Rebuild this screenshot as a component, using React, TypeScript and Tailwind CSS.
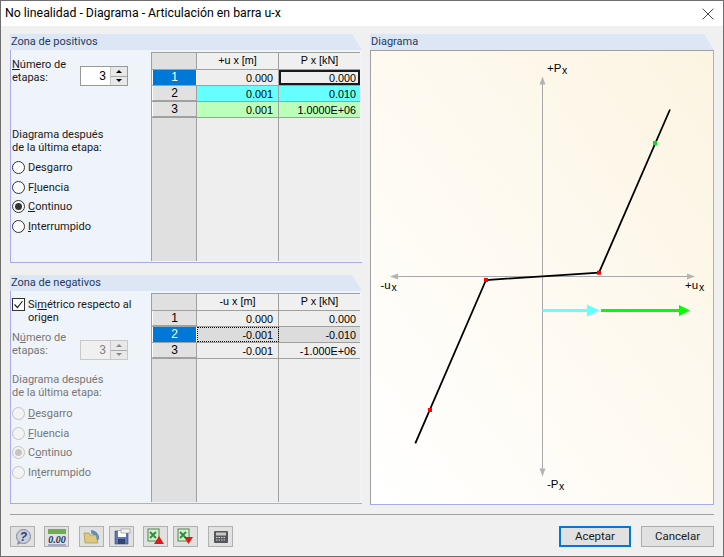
import { X } from "lucide-react";

const uiFont = "font-['Roboto','Noto_Sans',sans-serif]";
const cellFont = "font-['Liberation_Sans',sans-serif]";

function Radio({ checked, disabled, children }: { checked?: boolean; disabled?: boolean; children: React.ReactNode }) {
  return (
    <div className="flex items-center h-[13px] gap-[3px]">
      <span
        className={`w-[13px] h-[13px] rounded-full border flex items-center justify-center flex-none ${
          disabled ? "border-[#c4c4c4] bg-[#f3f3f3]" : "border-[#333333] bg-white"
        }`}
      >
        {checked && <span className={`w-[7px] h-[7px] rounded-full ${disabled ? "bg-[#c4c4c4]" : "bg-[#333333]"}`} />}
      </span>
      <span className={disabled ? "text-[#777777]" : "text-[#1a1a1a]"}>{children}</span>
    </div>
  );
}

function Spinner({ disabled }: { disabled?: boolean }) {
  return (
    <div className={`flex w-[48px] h-[20px] border ${disabled ? "border-[#c8c8c8]" : "border-[#999999]"}`}>
      <div
        className={`flex-1 text-right pr-[4px] leading-[18px] text-[12px] ${cellFont} ${
          disabled ? "bg-[#f0f0f0] text-[#808080]" : "bg-white text-black"
        }`}
      >
        3
      </div>
      <div className="w-[17px] flex flex-col border-l border-[#c8c8c8] bg-[#e8e8e8]">
        <div className="flex-1 flex items-center justify-center border-b border-[#a8a8a8]">
          <span className={`border-x-[3px] border-x-transparent border-b-[3px] ${disabled ? "border-b-[#888888]" : "border-b-black"}`} />
        </div>
        <div className="flex-1 flex items-center justify-center">
          <span className={`border-x-[3px] border-x-transparent border-t-[3px] ${disabled ? "border-t-[#888888]" : "border-t-black"}`} />
        </div>
      </div>
    </div>
  );
}

type Row = {
  n: string;
  a: string;
  b: string;
  bg?: string;
  rowSel?: boolean;
  aClass?: string;
  bClass?: string;
};

function Sheet({ head, rows }: { head: string; rows: Row[] }) {
  return (
    <div className={`w-[209px] self-stretch flex flex-col border-l border-[#a0a0a0] bg-[#eeeeee] text-[10.8px] text-black ${cellFont}`}>
      <div className="flex h-[18px] border-t border-b border-[#a0a0a0] flex-none">
        <div className="w-[45px] bg-[#e0e0e0] border-r border-[#a0a0a0]" />
        <div className="w-[82px] border-r border-[#a0a0a0] text-center leading-[15px] bg-[#f0f0f0]">
          {head}
          <span> x</span> [m]
        </div>
        <div className="flex-1 text-center leading-[15px] bg-[#f0f0f0]">
          P<span> x</span> [kN]
        </div>
      </div>
      {rows.map((r) => (
        <div key={r.n} className="flex h-[16px] border-b border-[#a0a0a0] flex-none">
          <div
            className={`w-[45px] border-r border-[#a0a0a0] text-center leading-[14px] text-[12px] ${
              r.rowSel ? "bg-[#0078d7] text-white border-l border-white" : "bg-[#e1e1e1] border-b border-[#6e6e6e] border-l border-l-white"
            }`}
          >
            {r.n}
          </div>
          <div className={`w-[82px] border-r border-[#a0a0a0] text-right pr-[5px] leading-[16px] ${r.bg ?? ""} ${r.aClass ?? ""}`}>{r.a}</div>
          <div className={`flex-1 text-right pr-[4px] leading-[16px] ${r.bg ?? ""} ${r.bClass ?? ""}`}>{r.b}</div>
        </div>
      ))}
      <div className="flex flex-1">
        <div className="w-[45px] bg-[#e0e0e0] border-r border-[#a0a0a0]" />
        <div className="w-[82px] border-r border-[#a0a0a0]" />
        <div className="flex-1" />
      </div>
    </div>
  );
}

function PanelTitle({ children }: { children: React.ReactNode }) {
  return (
    <div className="h-[16px] flex-none bg-[#dce6f4] pl-[1px] leading-[16px] text-[#1f3a5f] [clip-path:polygon(0_0,calc(100%-10px)_0,100%_100%,0_100%)]">
      {children}
    </div>
  );
}

function Panel({ title, className, children }: { title: string; className?: string; children: React.ReactNode }) {
  return (
    <div className={`flex flex-col ${className ?? ""}`}>
      <PanelTitle>{title}</PanelTitle>
      <div className="flex-1 flex min-h-0 bg-[#eff3fa] border-b border-l border-[#a9a9f0]">{children}</div>
    </div>
  );
}

function Diagram() {
  return (
    <svg className="w-full h-full block" viewBox="0 0 342 453">
      <defs>
        <linearGradient id="paper" x1="1" y1="0" x2="0" y2="1">
          <stop offset="0" stopColor="#fcf4e2" />
          <stop offset="0.5" stopColor="#fefaf1" />
          <stop offset="1" stopColor="#ffffff" />
        </linearGradient>
      </defs>
      <rect width="342" height="453" fill="url(#paper)" />
      {/* axes */}
      <path d="M171.500 30V421M24 225.500H319" stroke="#a8a8a8" strokeWidth="1" fill="none" />
      <path d="M171.500 25.500l-3 8h6zM171.500 425.500l-3-8h6zM19 225.500l8-3v6zM324 225.500l-8-3v6z" fill="#b4b4b4" />
      {/* curve */}
      <path d="M299 58.500L228 221.700L115 229L44.300 392.300" stroke="#000000" strokeWidth="1.800" fill="none" />
      <rect x="226" y="219.700" width="4" height="4" fill="#ff0000" />
      <rect x="113" y="227" width="4" height="4" fill="#ff0000" />
      <rect x="57" y="357" width="4" height="4" fill="#ff0000" />
      <rect x="282" y="90" width="4" height="4" fill="#00e020" />
      {/* step arrows */}
      <path d="M171.500 259.500H217" stroke="#66ffff" strokeWidth="3" />
      <path d="M216 253.500l13 6-13 6z" fill="#66ffff" />
      <path d="M230 259.500H309" stroke="#00ff00" strokeWidth="3" />
      <path d="M308 254l11 5.500-11 5.500z" fill="#00ff00" />
      <g fontFamily="Liberation Sans" fontSize="11.5" fill="#000000">
        <text x="176" y="20.700">+P</text>
        <text x="191" y="22.500" fontSize="10.5">x</text>
        <text x="9.500" y="238">-u</text>
        <text x="20.500" y="239.500" fontSize="10.5">x</text>
        <text x="314" y="238">+u</text>
        <text x="328" y="239.500" fontSize="10.5">x</text>
        <text x="176" y="436.700">-P</text>
        <text x="188" y="438.500" fontSize="10.5">x</text>
      </g>
    </svg>
  );
}

function ToolBtn({ children, className }: { children: React.ReactNode; className?: string }) {
  return (
    <div className={`w-[25px] h-[21px] flex-none border border-[#b0b0b0] bg-[#e1e1e1] flex items-center justify-center ${className ?? ""}`}>
      {children}
    </div>
  );
}

export default function App() {
  return (
    <div className={`w-[724px] h-[557px] flex flex-col border-x border-b border-[#6e6e6e] bg-[#f0f0f0] text-[11px] overflow-hidden ${uiFont}`}>
      <div className="h-[26px] flex-none bg-white border-t border-[#6e6e6e] flex items-center justify-between pl-[4px] pr-[5px] text-[12.3px] text-black">
        <span>No linealidad - Diagrama - Articulación en barra u-x</span>
        <X size={20} strokeWidth={1} className="text-[#222222]" />
      </div>
      <div className="flex-1 flex gap-[8px] pt-[8px] pl-[9px] pr-[9px] min-h-0">
        <div className="w-[352px] flex flex-col gap-[12px]">
          <Panel title="Zona de positivos" className="h-[229px]">
            <div className="w-[140px] flex-none pl-[1px] pt-[8px] text-[#1a1a1a] leading-[13px]">
              <div className="flex items-start justify-between pr-[23px] h-[70px]">
                <div>
                  <u>N</u>úmero de
                  <br />
                  etapas:
                </div>
                <div className="mt-[8px]"><Spinner /></div>
              </div>
              <div>Diagrama después</div>
              <div>de la última etapa:</div>
              <div className="flex flex-col gap-[6.500px] mt-[7px]">
                <Radio>Des<u>g</u>arro</Radio>
                <Radio>F<u>l</u>uencia</Radio>
                <Radio checked><u>C</u>ontinuo</Radio>
                <Radio><u>I</u>nterrumpido</Radio>
              </div>
            </div>
            <div className="flex-1 flex pt-[2px] pb-[1px] justify-start">
              <Sheet
                head="+u"
                rows={[
                  { n: "1", a: "0.000", b: "0.000", rowSel: true, bClass: "outline outline-2 -outline-offset-2 outline-[#1a1a1a]" },
                  { n: "2", a: "0.001", b: "0.010", bg: "bg-[#66ffff]" },
                  { n: "3", a: "0.001", b: "1.0000E+06", bg: "bg-[#bbffbb]" },
                ]}
              />
            </div>
          </Panel>
          <Panel title="Zona de negativos" className="h-[229px]">
            <div className="w-[140px] flex-none pl-[1px] pt-[7px] leading-[13px]">
              <div className="flex items-start gap-[3px] text-[#1a1a1a]">
                <span className="w-[13px] h-[13px] flex-none border border-[#333333] bg-white flex items-center justify-center">
                  <svg width="11" height="11" viewBox="0 0 11 11">
                    <path d="M1.500 5.500L4.500 8.500L9.500 2" stroke="#222222" strokeWidth="1.200" fill="none" />
                  </svg>
                </span>
                <span>
                  Si<u>m</u>étrico respecto al
                  <br />
                  origen
                </span>
              </div>
              <div className="flex items-start justify-between pr-[23px] h-[42px] mt-[7px] text-[#777777]">
                <div>
                  N<u>ú</u>mero de
                  <br />
                  etapas:
                </div>
                <div className="mt-[9px]"><Spinner disabled /></div>
              </div>
              <div className="text-[#777777]">Diagrama después</div>
              <div className="text-[#777777]">de la última etapa:</div>
              <div className="flex flex-col gap-[6.500px] mt-[8px]">
                <Radio disabled><u>D</u>esgarro</Radio>
                <Radio disabled><u>F</u>luencia</Radio>
                <Radio disabled checked>C<u>o</u>ntinuo</Radio>
                <Radio disabled>In<u>t</u>errumpido</Radio>
              </div>
            </div>
            <div className="flex-1 flex pt-[2px] pb-[1px] justify-start">
              <Sheet
                head="-u"
                rows={[
                  { n: "1", a: "0.000", b: "0.000" },
                  { n: "2", a: "-0.001", b: "-0.010", rowSel: true, aClass: "bg-[#dcdcdc] outline-1 outline-dotted -outline-offset-1 outline-black", bClass: "bg-[#dcdcdc]" },
                  { n: "3", a: "-0.001", b: "-1.000E+06" },
                ]}
              />
            </div>
          </Panel>
        </div>
        <div className="w-[344px] flex flex-col">
          <PanelTitle>Diagrama</PanelTitle>
          <div className="flex-1 min-h-0 border-t border-l border-t-[#a0a0a0] border-l-[#a0a0a0] border-r border-b border-r-[#a9a9f0] border-b-[#a9a9f0]">
            <Diagram />
          </div>
        </div>
      </div>
      <div className="mx-[9px] mt-[9px] h-[1px] bg-[#a0a0a0] flex-none" />
      <div className="h-[41px] flex-none flex items-center pl-[9px] pr-[9px] pt-[2px]">
        <div className="flex">
          <ToolBtn className="mr-[9px]">
            <svg width="18" height="18" viewBox="0 0 18 18">
              <circle cx="9.500" cy="8.500" r="7" fill="#c9cedb" stroke="#8089a0" />
              <path d="M4 13l-1 4 4-2z" fill="#8089a0" />
              <text x="9.500" y="13" textAnchor="middle" fontSize="12" fontWeight="700" fontStyle="italic" fill="#2c3f73" fontFamily="Liberation Sans">?</text>
            </svg>
          </ToolBtn>
          <ToolBtn className="mr-[10px]">
            <svg width="20" height="18" viewBox="0 0 20 18">
              <rect x="1" y="1" width="18" height="5" fill="#6fae4a" />
              <path d="M1 17h18" stroke="#6a78b0" strokeWidth="1" />
              <text x="10" y="15" textAnchor="middle" fontSize="10" fontStyle="italic" fontWeight="700" fill="#223366" fontFamily="Liberation Serif">0.00</text>
            </svg>
          </ToolBtn>
          <ToolBtn className="mr-[5px]">
            <svg width="18" height="18" viewBox="0 0 18 18">
              <path d="M8 2a8 8 0 0 1 8 9l-3 3-1-6-4-3z" fill="#5a90c4" />
              <path d="M1 5h5l1 2h6l2 8H2z" fill="#dcc87f" stroke="#9a8a4e" strokeWidth="0.600" />
            </svg>
          </ToolBtn>
          <ToolBtn className="mr-[9px]">
            <svg width="18" height="18" viewBox="0 0 18 18">
              <path d="M2 3h13v13H2z" fill="#6078b8" stroke="#33446e" strokeWidth="0.600" />
              <rect x="5" y="3" width="8" height="6" fill="#ffffff" />
              <rect x="5" y="11" width="7" height="5" fill="#33446e" />
              <rect x="8" y="1" width="9" height="4" fill="#f4f4f4" stroke="#777777" strokeWidth="0.500" />
            </svg>
          </ToolBtn>
          <ToolBtn className="mr-[5px]">
            <svg width="18" height="18" viewBox="0 0 18 18">
              <rect x="1" y="1" width="11" height="12" fill="#d8ecd4" stroke="#4a8a4a" />
              <path d="M3 4l6 6M9 4l-6 6" stroke="#2f8f3f" strokeWidth="2" />
              <path d="M12 8l5 8H7z" fill="#e01818" />
            </svg>
          </ToolBtn>
          <ToolBtn className="mr-[10px]">
            <svg width="18" height="18" viewBox="0 0 18 18">
              <rect x="1" y="1" width="11" height="12" fill="#d8ecd4" stroke="#4a8a4a" />
              <path d="M3 4l6 6M9 4l-6 6" stroke="#2f8f3f" strokeWidth="2" />
              <path d="M7 9h9l-4.500 7z" fill="#e01818" />
            </svg>
          </ToolBtn>
          <ToolBtn>
            <svg width="16" height="16" viewBox="0 0 16 16">
              <rect x="1" y="2" width="14" height="12" rx="1" fill="#55565c" />
              <rect x="3" y="3.500" width="10" height="3" fill="#c8c8c8" />
              <path d="M3 8.500h10M3 11h10" stroke="#d8d8d8" strokeWidth="1.200" strokeDasharray="1.500 1" />
            </svg>
          </ToolBtn>
        </div>
        <div className="ml-auto flex gap-[10px] text-[11.5px] text-[#1a1a1a]">
          <button className="w-[72px] h-[21px] border-2 border-[#0078d7] bg-[#e1e1e1]">Aceptar</button>
          <button className="w-[73px] h-[21px] border border-[#adadad] bg-[#e1e1e1]">Cancelar</button>
        </div>
      </div>
    </div>
  );
}
